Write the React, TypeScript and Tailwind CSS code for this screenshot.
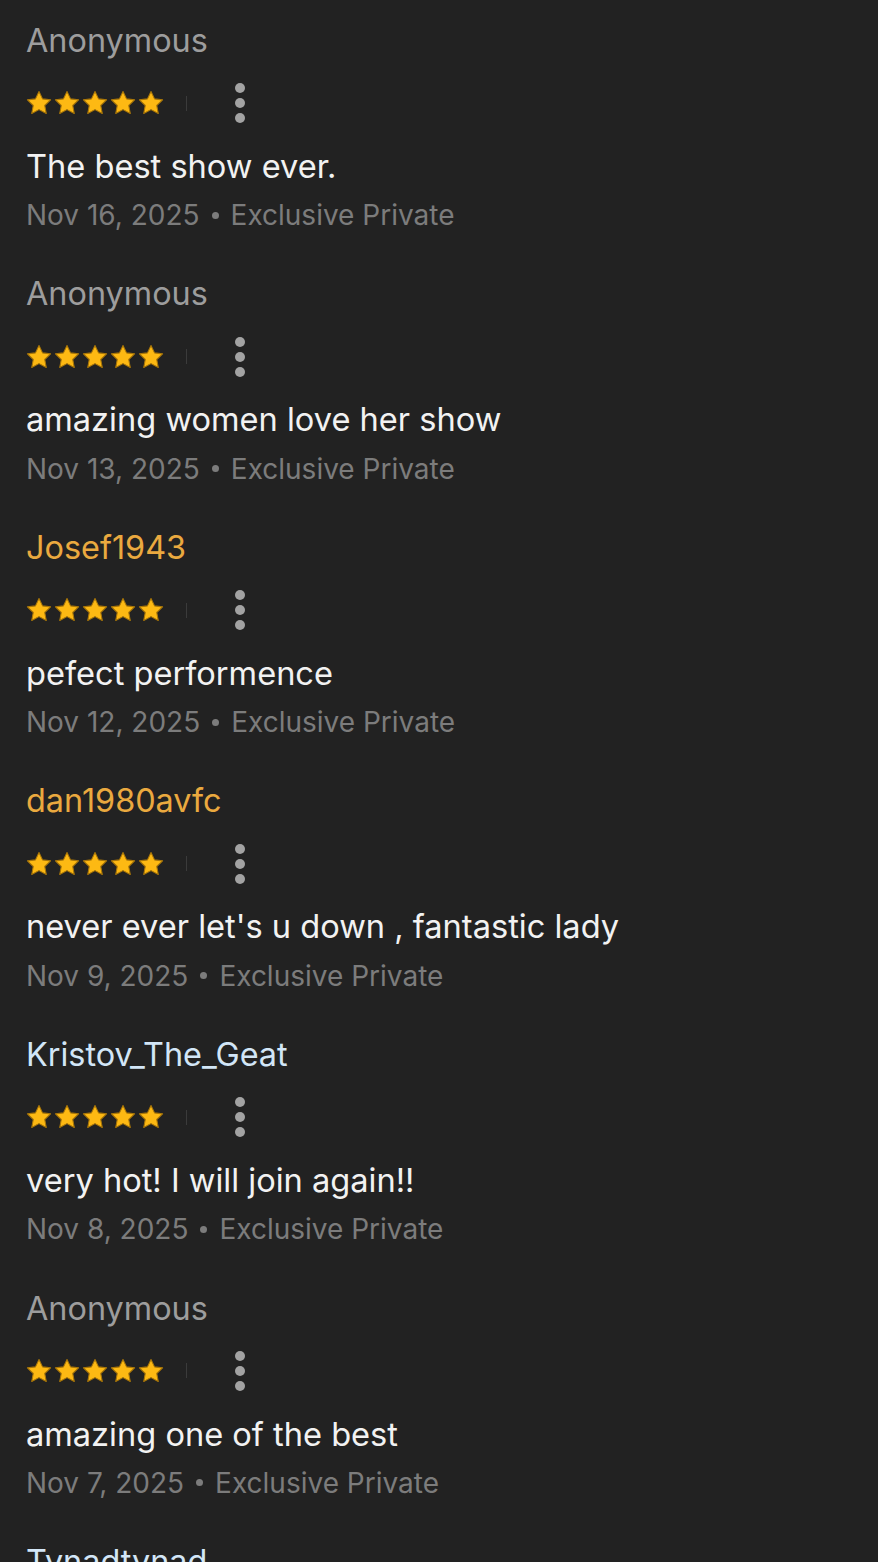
type Review = {
  name: string;
  nameColor: string;
  text: string;
  date: string;
};

const reviews: Review[] = [
  { name: "Anonymous", nameColor: "text-[#9d9d9d]", text: "The best show ever.", date: "Nov 16, 2025" },
  { name: "Anonymous", nameColor: "text-[#9d9d9d]", text: "amazing women love her show", date: "Nov 13, 2025" },
  { name: "Josef1943", nameColor: "text-[#eaa93f]", text: "pefect performence", date: "Nov 12, 2025" },
  { name: "dan1980avfc", nameColor: "text-[#eaa93f]", text: "never ever let's u down , fantastic lady", date: "Nov 9, 2025" },
  { name: "Kristov_The_Geat", nameColor: "text-[#d2e6f7]", text: "very hot! I will join again!!", date: "Nov 8, 2025" },
  { name: "Anonymous", nameColor: "text-[#9d9d9d]", text: "amazing one of the best", date: "Nov 7, 2025" },
  { name: "Tynadtynad", nameColor: "text-[#d2e6f7]", text: "", date: "Nov 6, 2025" },
];

function Star() {
  return (
    <svg width="26" height="26" viewBox="0 0 24 24">
      <path
        d="M12 1.4l3.3 6.8 7.4.9-5.4 5.2 1.4 7.4L12 18.1l-6.7 3.6 1.4-7.4-5.4-5.2 7.4-.9z"
        fill="#fdb913"
        stroke="#a97608"
        strokeWidth="1"
        strokeLinejoin="round"
      />
    </svg>
  );
}

function ReviewItem({ name, nameColor, text, date }: Review) {
  return (
    <div className="flex flex-col mb-[41.6px]">
      <div className={`h-[40px] flex items-center text-[32.4px] whitespace-nowrap ${nameColor}`}>{name}</div>
      <div className="h-[40px] mt-[22px] flex items-center">
        <div className="flex gap-[2px]">
          {[0, 1, 2, 3, 4].map((i) => (
            <Star key={i} />
          ))}
        </div>
        <div className="ml-[22px] w-px h-[15px] bg-[#3b3b3b]" />
        <div className="ml-[48px] flex flex-col gap-[5px]">
          <span className="w-[10px] h-[10px] rounded-full bg-[#a3a3a3]" />
          <span className="w-[10px] h-[10px] rounded-full bg-[#a3a3a3]" />
          <span className="w-[10px] h-[10px] rounded-full bg-[#a3a3a3]" />
        </div>
      </div>
      <div className="h-[40px] mt-[23px] flex items-center text-[32.6px] text-[#f2f2f2] whitespace-nowrap">{text}</div>
      <div className="h-[36px] mt-[11px] flex items-center text-[28px] text-[#7c7c7c] whitespace-nowrap">
        {date}
        <span className="mx-[12px] w-[7px] h-[7px] rounded-full bg-[#7c7c7c]" />
        Exclusive Private
      </div>
    </div>
  );
}

export default function App() {
  return (
    <div
      className="w-[878px] h-[1562px] overflow-hidden bg-[#222222] pl-[26px] pt-[21px]"
      style={{ fontFamily: "Inter, 'Noto Sans', sans-serif" }}
    >
      {reviews.map((r, i) => (
        <ReviewItem key={i} {...r} />
      ))}
    </div>
  );
}
